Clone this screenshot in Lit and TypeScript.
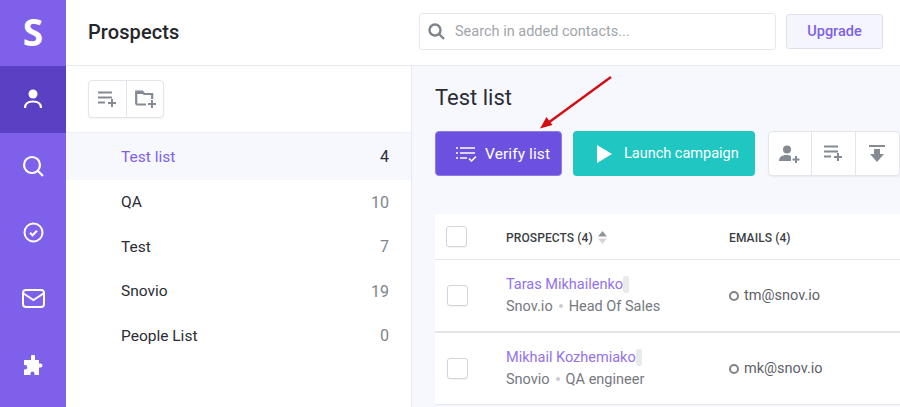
import { LitElement, html, css, svg } from "lit";
import { customElement } from "lit/decorators.js";

const listAdd = svg`<path d="M0 1.500h14M0 6.500h14M0 11.500h7" stroke="currentColor" stroke-width="1.800" fill="none"/><path d="M14 8v8M10 12h8" stroke="currentColor" stroke-width="2" fill="none"/>`;

interface Item { name: string; count: number; }
const lists: Item[] = [
  { name: "Test list", count: 4 },
  { name: "QA", count: 10 },
  { name: "Test", count: 7 },
  { name: "Snovio", count: 19 },
  { name: "People List", count: 0 },
];
const prospects = [
  { name: "Taras Mikhailenko", company: "Snov.io", role: "Head Of Sales", email: "tm@snov.io" },
  { name: "Mikhail Kozhemiako", company: "Snovio", role: "QA engineer", email: "mk@snov.io" },
];

@customElement("app-root")
export class AppRoot extends LitElement {
  static styles = css`
    :host { display: block; width: 900px; height: 407px; overflow: hidden; position: relative; font-family: Roboto, "Liberation Sans", sans-serif; color: #2b2d33; background: #fff; }
    * { box-sizing: border-box; }
    .app { display: flex; height: 407px; }
    .rail { width: 66px; flex: none; background: #7f60ea; display: flex; flex-direction: column; color: #fff; }
    .rail-item { height: 66.5px; flex: none; display: flex; align-items: center; justify-content: center; }
    .rail-item.logo-item { height: 66px; padding-bottom: 4px; }
    .rail-item.active { background: #5c40c4; }
    .logo { font-size: 37px; font-weight: 700; line-height: 1; font-family: "Open Sans", Roboto, sans-serif; }
    .main { flex: 1; min-width: 0; display: flex; flex-direction: column; }
    .top { height: 66px; flex: none; display: flex; align-items: center; padding: 0 17px 2px 22px; border-bottom: 1px solid #e8e9ee; }
    .title { font-size: 20px; font-weight: 500; width: 331px; color: #24262b; letter-spacing: .1px; }
    .search { width: 357px; height: 37px; border: 1px solid #e6e8ee; border-radius: 3px; display: flex; align-items: center; gap: 10px; padding-left: 8px; font-size: 14.5px; color: #a2a5ab; }
    .search svg { color: #7f858c; }
    .upgrade { width: 97px; height: 35px; margin-left: 10px; border: 1px solid #dfe1ea; border-radius: 3px; background: #f5f6fd; color: #7f60ea; font-size: 14.5px; font-weight: 500; display: flex; align-items: center; justify-content: center; }
    .body { flex: 1; display: flex; min-height: 0; }
    .side { width: 346px; flex: none; border-right: 1px solid #e8e9ee; }
    .side-tools { height: 67px; padding: 14px 0 0 22px; border-bottom: 1px solid #eef0f4; }
    .group { display: inline-flex; background: #fff; border: 1px solid #e4e5ea; border-radius: 4px; box-shadow: 0 1px 2px rgba(0,0,0,.06); color: #858b92; }
    .group span { display: flex; align-items: center; justify-content: center; border-left: 1px solid #e4e5ea; }
    .group span:first-child { border-left: 0; }
    .side-tools .group span { width: 37px; height: 36px; }
    .list-row { height: 44.5px; display: flex; align-items: center; justify-content: space-between; padding: 0 22px 0 55px; font-size: 15.5px; color: #2b2d33; }
    .list-row.active { height: 47px; background: #f6f8fe; color: #7f60ea; }
    .list-row b { font-weight: 400; color: #80858c; font-size: 16px; }
    .list-row.active b { color: #2b2d33; }
    .content { flex: 1; min-width: 0; background: #f6f8fe; padding: 18px 0 0 23px; overflow: hidden; }
    h2 { margin: 0; font-size: 22px; font-weight: 400; line-height: 28px; color: #2b2d33; }
    .actions { display: flex; margin-top: 19px; width: 520px; }
    .btn { height: 45px; border-radius: 4px; color: #fff; display: flex; align-items: center; }
    .verify { width: 127px; background: #6c51e0; padding-left: 20px; gap: 8px; border: 1px solid #8f7be6; font-size: 15.5px; letter-spacing: .1px; }
    .launch { width: 182px; margin-left: 11px; background: #20c7c2; padding-left: 24px; gap: 12px; font-size: 14.5px; }
    .actions .group { margin-left: 13px; height: 45px; }
    .actions .group span { width: 44px; }
    .actions .group span:first-child { width: 41.5px; }
    .table { margin-top: 38px; background: #fff; width: 520px; }
    .row { display: flex; align-items: center; border-bottom: 1px solid #e6e7eb; }
    .row.head { height: 46px; padding-top: 2px; font-size: 12px; font-weight: 500; color: #3c3f45; letter-spacing: .1px; }
    .row.head .cb { margin-left: 11px; margin-top: -2px; }
    .row.head .col-name { margin-left: 39px; }
    .row.item { height: 73px; border-bottom: 2px solid #e3e4e8; }
    .row.item:last-child { height: 72px; border-bottom: 1px solid #e6e7eb; }
    .cb { width: 21px; height: 21px; border: 1px solid #d3d5da; border-radius: 3px; background: #fff; margin-left: 12px; flex: none; box-shadow: 0 1px 1px rgba(0,0,0,.05); }
    .col-name { margin-left: 38px; width: 223px; flex: none; display: flex; flex-direction: column; gap: 3px; }
    .row.head .col-name { flex-direction: row; align-items: center; gap: 5px; }
    .name { display: flex; align-items: center; font-size: 14.5px; color: #9272ee; line-height: 18px; }
    .name i { width: 6px; height: 17px; background: #e9eaec; border-radius: 2px; }
    .meta { font-size: 14.5px; color: #75797f; line-height: 19px; display: flex; align-items: center; gap: 6px; }
    .meta i { width: 4px; height: 4px; border-radius: 50%; background: #c9cbd0; }
    .email { display: flex; align-items: center; gap: 5px; font-size: 14.5px; color: #5d6167; }
    .email i { width: 10px; height: 10px; border: 2px solid #7f8489; border-radius: 50%; }
    .arrow { position: absolute; left: 530px; top: 70px; pointer-events: none; }
  `;

  render() {
    return html`
      <div class="app">
        <nav class="rail">
          <div class="rail-item logo-item"><span class="logo">S</span></div>
          <div class="rail-item active">
            <svg width="20" height="22" viewBox="0 0 20 22" fill="none"><circle cx="10" cy="6" r="4.500" fill="#fff"/><path d="M2 20c0-4.500 3.500-6.500 8-6.500s8 2 8 6.500" stroke="#fff" stroke-width="2.200"/></svg>
          </div>
          <div class="rail-item">
            <svg width="22" height="22" viewBox="0 0 22 22" fill="none" stroke="#fff" stroke-width="2.200"><circle cx="10" cy="10" r="8"/><path d="M16 16l5 5"/></svg>
          </div>
          <div class="rail-item">
            <svg width="21" height="21" viewBox="0 0 21 21" fill="none" stroke="#fff" stroke-width="2"><circle cx="10.500" cy="10.500" r="9"/><path d="M7 10.800l2.500 2.400 4.500-4.400" stroke-width="2.200"/></svg>
          </div>
          <div class="rail-item">
            <svg width="23" height="19" viewBox="0 0 23 19" fill="none" stroke="#fff" stroke-width="2"><rect x="1" y="1" width="21" height="17" rx="3"/><path d="M1.500 4.500l10 6.500 10-6.500"/></svg>
          </div>
          <div class="rail-item">
            <svg width="21" height="21" viewBox="0 0 21 21" fill="#fff"><path d="M8 1.500a2 2 0 0 1 4 0V5h4v3.500h1.500a2 2 0 0 1 0 4H16V20h-4.500v-1.500a2 2 0 0 0-4 0V20H1v-5.500h1a2.200 2.200 0 0 0 0-4.500H1V5h7z"/></svg>
          </div>
        </nav>
        <div class="main">
          <header class="top">
            <div class="title">Prospects</div>
            <div class="search">
              <svg width="17" height="17" viewBox="0 0 17 17" fill="none" stroke="currentColor" stroke-width="2.400"><circle cx="7" cy="7" r="5.500"/><path d="M11 11l5 5"/></svg>
              <span>Search in added contacts...</span>
            </div>
            <div class="upgrade">Upgrade</div>
          </header>
          <div class="body">
            <aside class="side">
              <div class="side-tools">
                <div class="group">
                  <span><svg width="19" height="17" viewBox="0 0 19 17">${listAdd}</svg></span>
                  <span><svg width="21" height="18" viewBox="0 0 21 18" fill="none" stroke="currentColor"><path d="M1.200 14.500V1.500h6l2 2.500h8v5M1.200 14.500H11" stroke-width="2.200"/><path d="M1 1h6.500l2 3H1z" fill="currentColor" stroke="none"/><path d="M17 10v8M13 14h8" stroke-width="2"/></svg></span>
                </div>
              </div>
              ${lists.map((l, i) => html`<div class="list-row ${i === 0 ? "active" : ""}"><span>${l.name}</span><b>${l.count}</b></div>`)}
            </aside>
            <section class="content">
              <h2>Test list</h2>
              <div class="actions">
                <div class="btn verify">
                  <svg width="21" height="16" viewBox="0 0 21 16" fill="none" stroke="#fff" stroke-width="1.600"><path d="M0 2h2M4 2h15M0 7h2M4 7h15M0 12h2M4 12h7"/><path d="M13 12.500l2.500 2.500 4.500-4.500"/></svg>
                  <span>Verify list</span>
                </div>
                <div class="btn launch">
                  <svg width="15" height="18" viewBox="0 0 15 18" fill="#fff"><path d="M0 0l15 9-15 9z"/></svg>
                  <span>Launch campaign</span>
                </div>
                <div class="group">
                  <span><svg width="21" height="18" viewBox="0 0 21 18" fill="currentColor"><circle cx="8" cy="4.500" r="4"/><path d="M0 16c0-4 3-6 7.500-6 2 0 3.500.4 4.500 1.200V16z"/><path d="M17 11v7M13.500 14.500h7" stroke="currentColor" stroke-width="2"/></svg></span>
                  <span><svg width="19" height="17" viewBox="0 0 19 17">${listAdd}</svg></span>
                  <span><svg width="16" height="17" viewBox="0 0 16 17" fill="currentColor"><path d="M0 0h16v2H0z"/><path d="M5 4h6v5h4l-7 8-7-8h4z"/></svg></span>
                </div>
              </div>
              <div class="table">
                <div class="row head">
                  <div class="cb"></div>
                  <div class="col-name">
                    <span>PROSPECTS (4)</span>
                    <svg width="9" height="13" viewBox="0 0 9 13"><path d="M4.500 0L9 5.500H0z" fill="#91959b"/><path d="M4.500 13L9 7.500H0z" fill="#d5d7da"/></svg>
                  </div>
                  <span>EMAILS (4)</span>
                </div>
                ${prospects.map(p => html`
                  <div class="row item">
                    <div class="cb"></div>
                    <div class="col-name">
                      <div class="name"><span>${p.name}</span><i></i></div>
                      <div class="meta"><span>${p.company}</span><i></i><span>${p.role}</span></div>
                    </div>
                    <div class="email"><i></i><span>${p.email}</span></div>
                  </div>`)}
              </div>
            </section>
          </div>
        </div>
      </div>
      <svg class="arrow" width="90" height="65" viewBox="530 70 90 65" fill="none">
        <path d="M611 77L548 123" stroke="#d40d12" stroke-width="2.400"/>
        <path d="M540 128.500l6.500-11.500 6 8z" fill="#d40d12"/>
      </svg>
    `;
  }
}
